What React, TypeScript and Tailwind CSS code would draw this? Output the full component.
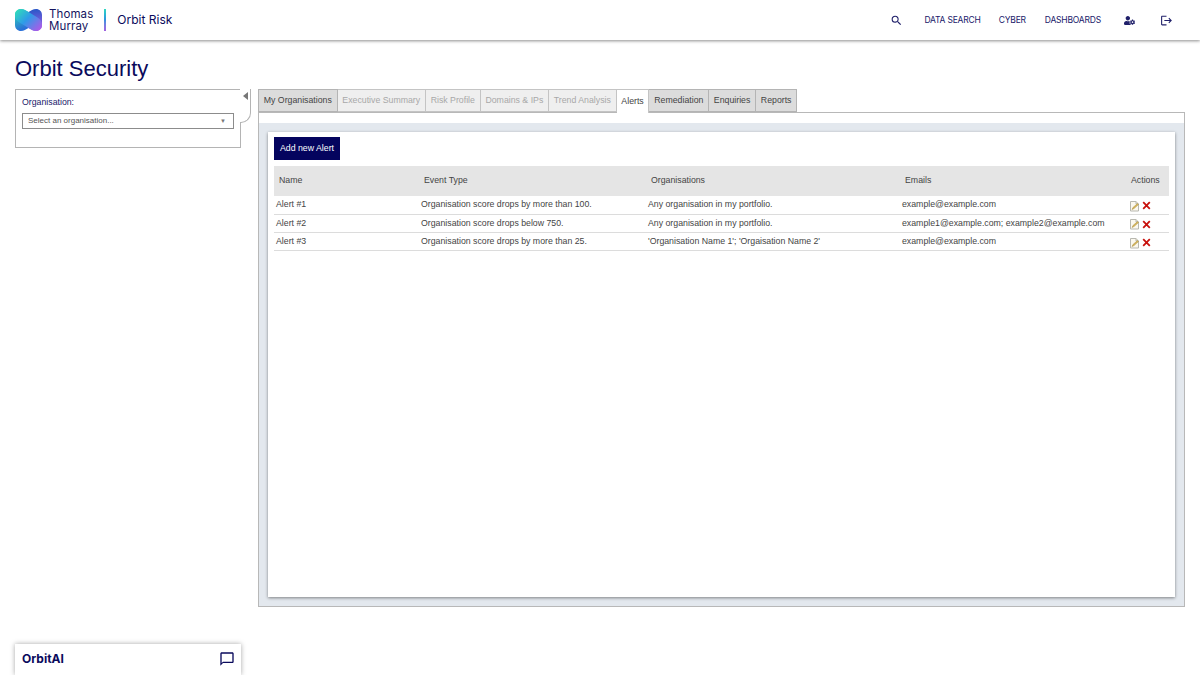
import { FaUserCog } from "react-icons/fa";
import { MdChatBubbleOutline, MdLogout, MdSearch } from "react-icons/md";

const navy = "text-[#0a0a5c]";

const tabs = [
  { label: "My Organisations", kind: "on" },
  { label: "Executive Summary", kind: "off" },
  { label: "Risk Profile", kind: "off" },
  { label: "Domains & IPs", kind: "off" },
  { label: "Trend Analysis", kind: "off" },
  { label: "Alerts", kind: "active" },
  { label: "Remediation", kind: "on" },
  { label: "Enquiries", kind: "on" },
  { label: "Reports", kind: "on" },
];

const alerts = [
  { name: "Alert #1", type: "Organisation score drops by more than 100.", orgs: "Any organisation in my portfolio.", emails: "example@example.com" },
  { name: "Alert #2", type: "Organisation score drops below 750.", orgs: "Any organisation in my portfolio.", emails: "example1@example.com; example2@example.com" },
  { name: "Alert #3", type: "Organisation score drops by more than 25.", orgs: "'Organisation Name 1'; 'Orgaisation Name 2'", emails: "example@example.com" },
];

function Logo() {
  return (
    <svg width="27" height="22" viewBox="0 0 27 22">
      <defs>
        <linearGradient id="logoBand" x1="0" y1="0" x2="1" y2="0.8">
          <stop offset="0" stopColor="#2fe4b4" />
          <stop offset="0.5" stopColor="#2f9ae8" />
          <stop offset="1" stopColor="#a85ce8" />
        </linearGradient>
        <linearGradient id="logoLeft" x1="0" y1="0" x2="0.3" y2="1">
          <stop offset="0" stopColor="#2fe4b4" />
          <stop offset="1" stopColor="#2a70d8" />
        </linearGradient>
        <linearGradient id="logoRight" x1="0.5" y1="0" x2="0.6" y2="1">
          <stop offset="0" stopColor="#2858c8" />
          <stop offset="1" stopColor="#a85ce8" />
        </linearGradient>
      </defs>
      <path d="M6 0C2.500 0 0 2.500 0 6v10c0 3.500 2.500 6 6 6 3 0 5-1.500 7.500-3V3C11 1.500 9 0 6 0z" fill="url(#logoLeft)" />
      <path d="M21 0c3.500 0 6 2.500 6 6v10c0 3.500-2.500 6-6 6-3 0-5-1.500-7.500-3V3C16 1.500 18 0 21 0z" fill="url(#logoRight)" />
      <path d="M6 0c3 0 5 1.500 7.500 3l9 5.500C25 10 27 12.500 27 16c0 3.500-2.500 6-6 6-3 0-5-1.500-7.500-3l-9-5.500C2 12 0 9.500 0 6c0-3.500 2.500-6 6-6z" fill="url(#logoBand)" />
    </svg>
  );
}

function EditIcon() {
  return (
    <svg width="11" height="12" viewBox="0 0 11 12">
      <path d="M1.500 1.500h5.500l2.500 2.500v7h-8z" fill="#fbf8ee" stroke="#b8b8b0" />
      <path d="M7 1.500v2.500h2.500" fill="#e8e4d0" stroke="#b8b8b0" />
      <path d="M3 9.500l1-2 4.500-4 1 1-4.500 4z" fill="#d8b858" stroke="#a88c40" strokeWidth="0.5" />
    </svg>
  );
}

function DeleteIcon() {
  return (
    <svg width="9" height="9" viewBox="0 0 9 9">
      <path d="M1.200 1.200l6.600 6.600M7.800 1.200L1.200 7.800" stroke="#c8100c" strokeWidth="1.800" fill="none" />
    </svg>
  );
}

export default function App() {
  return (
    <div className="relative h-[675px] w-[1200px] overflow-hidden bg-white font-['Liberation_Sans',Arial,sans-serif]">
      {/* Header */}
      <header className={`flex h-10 items-center bg-white pl-[15px] pr-[27px] shadow-[0_1px_3px_rgba(0,0,0,0.45)] ${navy}`}>
        <Logo />
        <div className="ml-[7px] font-['Inter',sans-serif] text-[11.5px] leading-[12px] tracking-[0.1px] text-[#14145e]">
          <div>Thomas</div>
          <div>Murray</div>
        </div>
        <div className="ml-[11px] h-[22px] w-[2px] bg-gradient-to-b from-[#30d8c0] via-[#3090e0] to-[#a060e0]" />
        <span className="ml-[11px] font-['Inter',sans-serif] text-[12px]">Orbit Risk</span>
        <nav className="ml-auto flex items-center font-['Inter',sans-serif] text-[8.5px] tracking-[-0.2px] text-[#20206a]">
          <MdSearch size={13} />
          <span className="ml-[21px]">DATA SEARCH</span>
          <span className="ml-[18px]">CYBER</span>
          <span className="ml-[19px]">DASHBOARDS</span>
          <FaUserCog size={11} className="ml-[23px]" />
          <MdLogout size={13} className="ml-[25px]" />
        </nav>
      </header>

      <div className="px-[15px]">
        <h1 className={`mt-[17px] h-[32px] text-[22px] leading-[24px] ${navy}`}>Orbit Security</h1>

        <div className="flex items-start gap-[17px]">
          {/* Sidebar */}
          <aside className="relative h-[59px] w-[226px] border border-[#b4b4b4] px-[6px] pt-[6px]">
            <label className="block text-[8.75px] leading-[12px] text-[#20206a]">Organisation:</label>
            <div className="mt-[5px] flex h-[16px] items-center justify-between border border-[#8c8c8c] pl-[5px] pr-[7px] text-[8px] text-[#555]">
              <span>Select an organisation...</span>
              <span className="text-[6px] text-[#777]">▼</span>
            </div>
            <div className="absolute right-[-11px] top-[-1px] flex h-[34px] w-[11px] justify-center rounded-br-[10px] border-r border-b border-[#b4b4b4] bg-white pt-[3px]">
              <span className="h-0 w-0 border-y-[4px] border-r-[5px] border-y-transparent border-r-[#777]" />
            </div>
          </aside>

          {/* Main */}
          <main className="w-[927px]">
            <div className="flex h-[23px]">
              {tabs.map((t) => (
                <div
                  key={t.label}
                  className={
                    t.kind === "active"
                      ? "relative z-10 mb-[-1px] flex h-[24px] items-center border border-b-0 border-l-0 border-[#c4c4c4] bg-white px-[4.75px] text-[8.75px] text-[#444]"
                      : t.kind === "on"
                        ? "flex items-center border border-l-0 first:border-l border-[#b4b4b4] bg-[#dcdcdc] px-[4.75px] text-[8.75px] text-[#444]"
                        : "flex items-center border border-l-0 border-[#c4c4c4] bg-[#efefef] px-[4.75px] text-[8.75px] text-[#a8a8a8]"
                  }
                >
                  {t.label}
                </div>
              ))}
            </div>

            <div className="h-[495px] border border-[#b8b8b8] bg-white pt-[10px]">
              <div className="h-[483px] bg-[#e3e8ee] px-[9px] pt-[9px]">
                <div className="h-[465px] bg-white px-[6px] pt-[5px] shadow-[0_1px_3px_rgba(0,0,0,0.45)]">
                  <button className="block h-[23px] bg-[#04045e] px-[6px] text-[8.75px] text-white">Add new Alert</button>

                  <table className="mt-[6px] w-[895px] table-fixed border-collapse text-[8.75px] text-[#444]">
                    <colgroup>
                      <col className="w-[145px]" />
                      <col className="w-[227px]" />
                      <col className="w-[254px]" />
                      <col className="w-[228px]" />
                      <col className="w-[41px]" />
                    </colgroup>
                    <thead>
                      <tr className="h-[30px] bg-[#e5e5e5] text-left">
                        <th className="pl-[5px] font-normal">Name</th>
                        <th className="pl-[5px] font-normal">Event Type</th>
                        <th className="pl-[5px] font-normal">Organisations</th>
                        <th className="pl-[5px] font-normal">Emails</th>
                        <th className="pl-[3px] font-normal">Actions</th>
                      </tr>
                    </thead>
                    <tbody>
                      {alerts.map((a) => (
                        <tr key={a.name} className="h-[18.33px] border-b border-[#dcdcdc]">
                          <td className="pl-[2px]">{a.name}</td>
                          <td className="pl-[2px]">{a.type}</td>
                          <td className="pl-[2px]">{a.orgs}</td>
                          <td className="pl-[2px]">{a.emails}</td>
                          <td>
                            <div className="flex items-center gap-[2px] pl-[1px] pt-[2px]">
                              <EditIcon />
                              <DeleteIcon />
                            </div>
                          </td>
                        </tr>
                      ))}
                    </tbody>
                  </table>
                </div>
              </div>
            </div>
          </main>
        </div>
      </div>

      {/* Chat bar */}
      <div className={`absolute bottom-0 left-[15px] flex h-[31px] w-[226px] items-center justify-between bg-white pl-[7px] pr-[6px] pb-[2px] shadow-[0_0_5px_rgba(0,0,0,0.35)] ${navy}`}>
        <span className="font-['Inter',sans-serif] text-[12px] font-bold">OrbitAI</span>
        <MdChatBubbleOutline size={16} />
      </div>
    </div>
  );
}
